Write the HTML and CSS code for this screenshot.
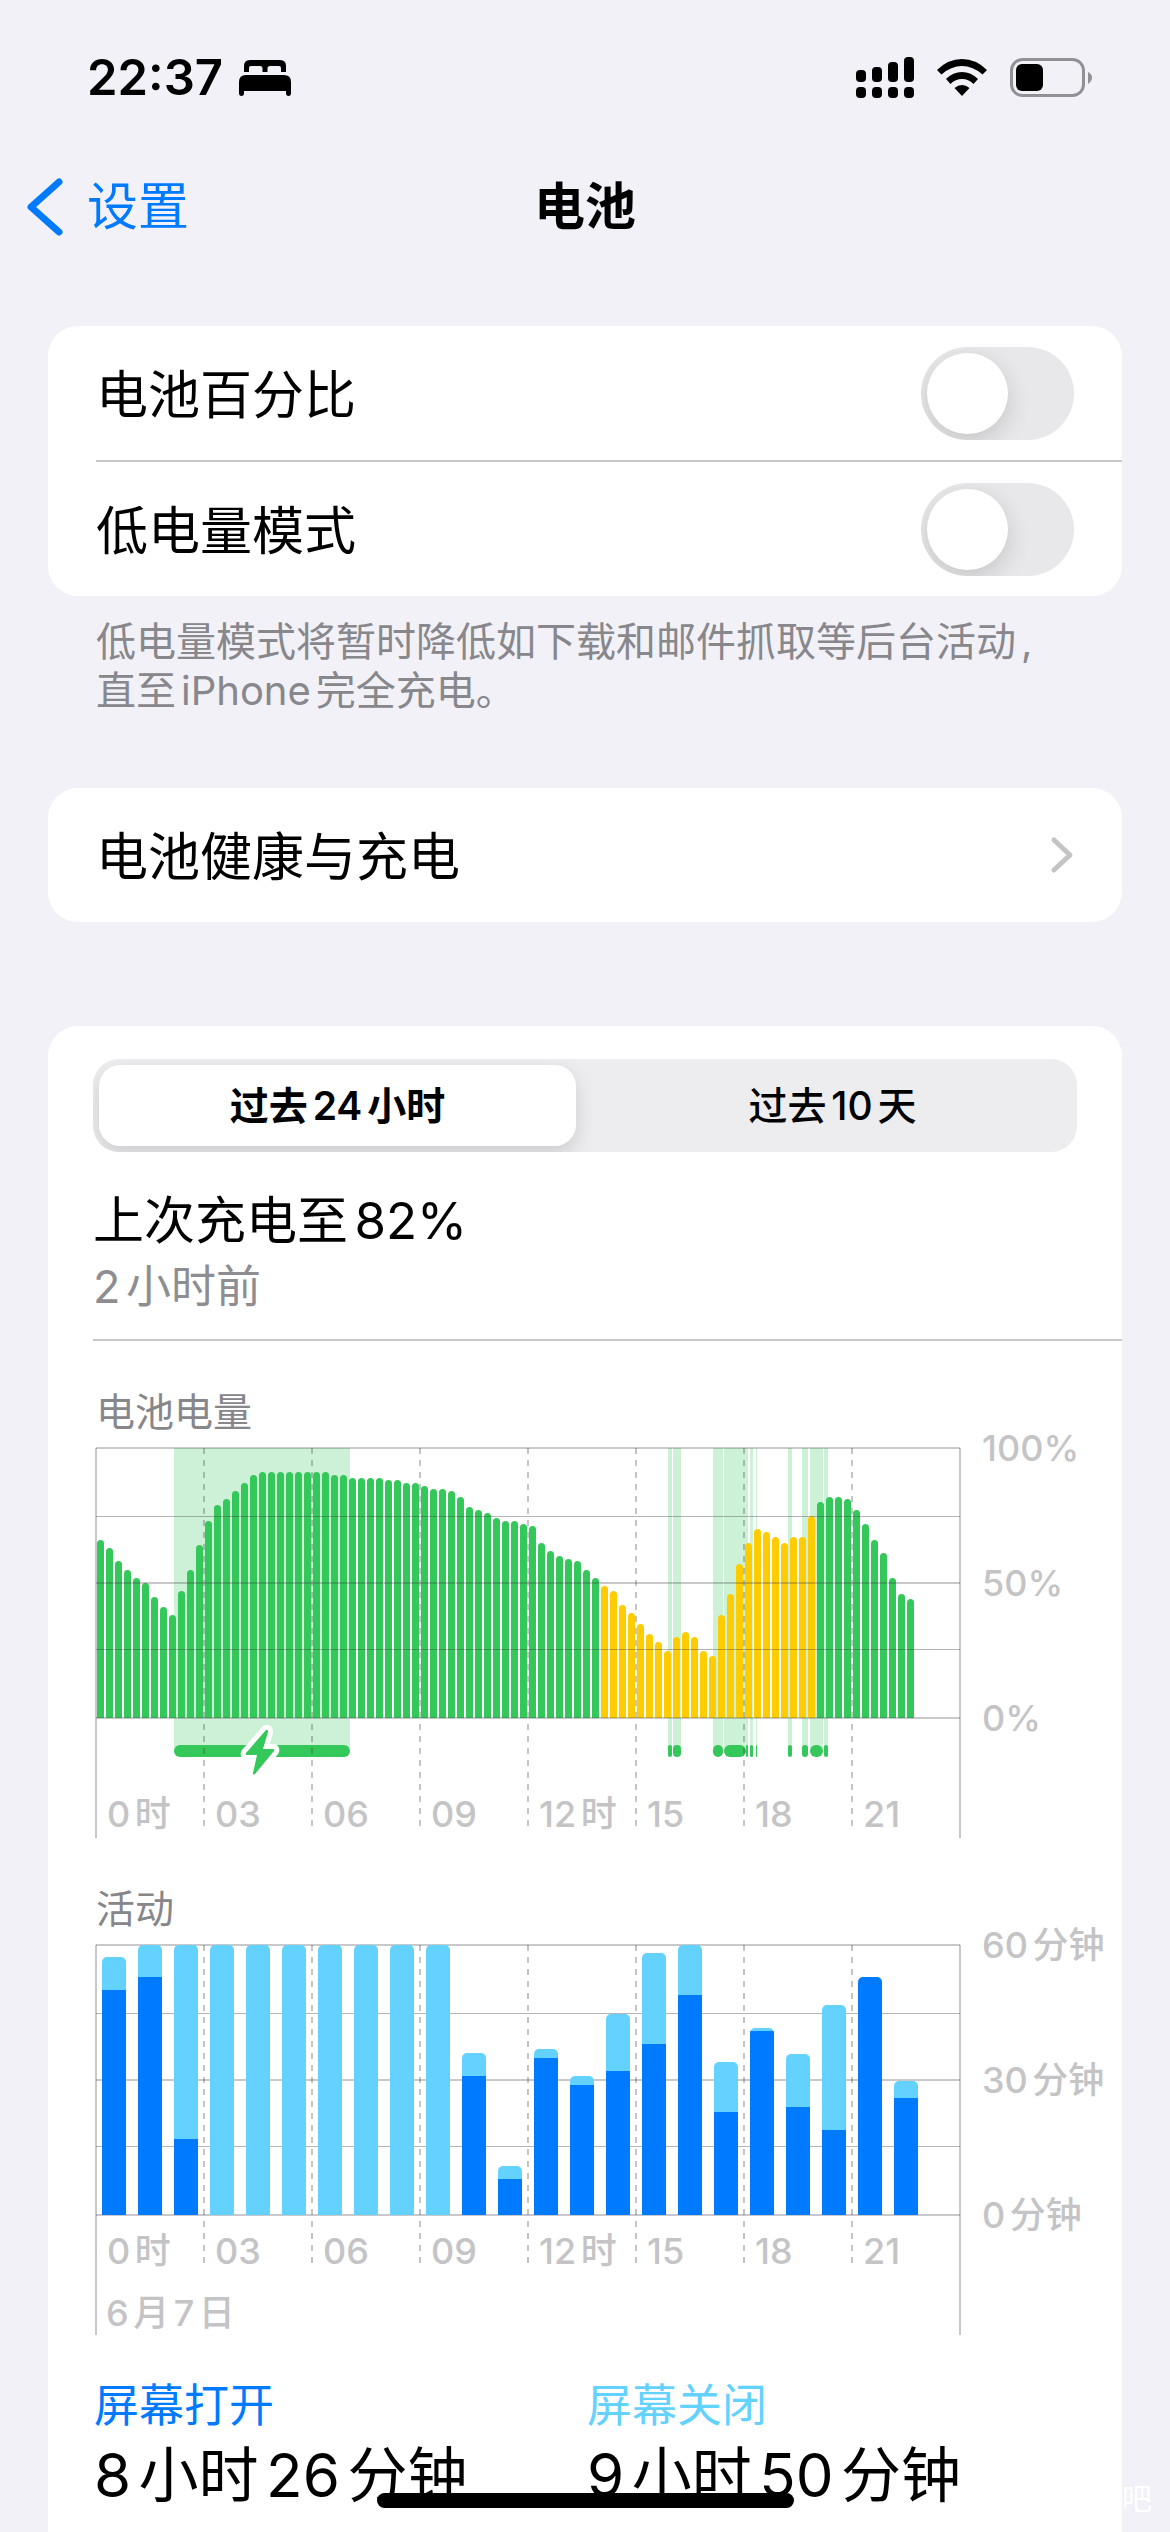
FILE: index.html
```html
<!DOCTYPE html>
<html lang="zh-CN">
<head>
    <meta charset="UTF-8">
    <meta name="viewport" content="width=device-width, initial-scale=1.0">
    <title>电池</title>
    <link rel="stylesheet" href="styles.css">
</head>
<body>
    <!-- Status bar -->
    <div class="status-bar">
        <div class="status-left">
            <span class="time">22:37</span>
            <svg width="52" height="36" viewBox="0 0 52 36">
                <path d="M5 12V6Q5 0 11 0H41Q47 0 47 6V12H42V8Q42 6 40 6H31Q28.500 6 28.500 8.500V12H23.500V8.500Q23.500 6 21 6H12Q10 6 10 8V12Z"/>
                <path d="M0 22Q0 15 7 15H45Q52 15 52 22V33Q52 36 49.500 36Q47 36 47 33V31H5V33Q5 36 2.500 36Q0 36 0 33Z"/>
            </svg>
        </div>
        <div class="status-right">
            <svg width="58" height="42" viewBox="0 0 58 42">
                <rect x="0" y="13" width="10" height="12" rx="4"/>
                <rect x="16" y="10" width="10" height="15" rx="4"/>
                <rect x="32" y="5" width="10" height="20" rx="4"/>
                <rect x="48" y="0" width="10" height="25" rx="4"/>
                <rect x="0" y="30" width="10" height="11" rx="4"/>
                <rect x="16" y="30" width="10" height="11" rx="4"/>
                <rect x="32" y="30" width="10" height="11" rx="4"/>
                <rect x="48" y="30" width="10" height="11" rx="4"/>
            </svg>
            <svg width="50" height="38" viewBox="0 0 50 38">
                <path d="M0 11Q11 0 25 0T50 11L45.500 15.500Q36 7 25 7T4.500 15.500Z"/>
                <path d="M9 20Q16 13 25 13T41 20L36.500 25Q31.500 20 25 20T13.500 25Z"/>
                <path d="M17.500 29Q21 26 25 26T32.500 29L25 37Z"/>
            </svg>
            <svg width="83" height="40" viewBox="0 0 83 40">
                <rect x="1.500" y="1.500" width="72" height="36" rx="11" fill="none" stroke="#919195" stroke-width="3"/>
                <rect x="6" y="6" width="27" height="27" rx="6"/>
                <path d="M78 14Q82 16 82 19.500T78 26Z" fill="#919195"/>
            </svg>
        </div>
    </div>

    <!-- Navigation -->
    <header class="nav">
        <a href="#" class="back">
            <svg width="36" height="58" viewBox="0 0 36 58">
                <path d="M32 4L4 29L32 54" fill="none" stroke="#007aff" stroke-width="7" stroke-linecap="round" stroke-linejoin="round"/>
            </svg>
            设置
        </a>
        <h1>电池</h1>
    </header>

    <main>
        <section class="card">
            <div class="row">
                <label for="percentage">电池百分比</label>
                <input type="checkbox" class="switch" id="percentage">
            </div>
            <div class="row">
                <label for="low-power">低电量模式</label>
                <input type="checkbox" class="switch" id="low-power">
            </div>
        </section>
        <p class="note">低电量模式将暂时降低如下载和邮件抓取等后台活动, 直至iPhone完全充电。</p>

        <a href="#" class="card row">
            <span>电池健康与充电</span>
            <svg width="24" height="38" viewBox="0 0 24 38">
                <path d="M4 4L20 19L4 34" fill="none" stroke="#c4c4c6" stroke-width="5" stroke-linecap="round" stroke-linejoin="round"/>
            </svg>
        </a>

        <section class="card usage">
            <div class="segmented">
                <button type="button" class="active">过去24小时</button>
                <button type="button">过去10天</button>
            </div>

            <div class="last-charge">
                <h2>上次充电至82%</h2>
                <p>2小时前</p>
            </div>

            <h3>电池电量</h3>
            <div class="chart battery">
                <div class="plot">
                    <div class="charging" id="charging"></div>
                    <div class="bars" id="battery-bars"></div>
                    <div class="lines"></div>
                    <div class="hours">
                        <span>0时</span><span>03</span><span>06</span><span>09</span>
                        <span>12时</span><span>15</span><span>18</span><span>21</span>
                    </div>
                    <svg class="bolt" width="42" height="56" viewBox="0 0 42 56">
                        <path d="M27 6L7 29Q6 31 8 31H18L14 49Q14 52 16 50L35 27Q36 25 34 25H24L29 8Q29 5 27 6Z" fill="#34c759" stroke="#fff" stroke-width="10" stroke-linejoin="round" paint-order="stroke"/>
                    </svg>
                </div>
                <div class="scale"><span>100%</span><span>50%</span><span>0%</span></div>
            </div>

            <h3>活动</h3>
            <div class="chart activity">
                <div class="plot">
                    <div class="lines"></div>
                    <div class="bars" id="activity-bars"></div>
                    <div class="hours">
                        <span>0时</span><span>03</span><span>06</span><span>09</span>
                        <span>12时</span><span>15</span><span>18</span><span>21</span>
                    </div>
                    <div class="date">6月7日</div>
                </div>
                <div class="scale"><span>60分钟</span><span>30分钟</span><span>0分钟</span></div>
            </div>

            <div class="totals">
                <div>
                    <p class="screen-on">屏幕打开</p>
                    <p class="total">8小时26分钟</p>
                </div>
                <div>
                    <p class="screen-off">屏幕关闭</p>
                    <p class="total">9小时50分钟</p>
                </div>
            </div>
        </section>
    </main>

    <div class="watermark">吧</div>
    <div class="home-indicator"></div>

    <script src="script.js"></script>
</body>
</html>
```
FILE: styles.css
```css
* {
  margin: 0;
  padding: 0;
  box-sizing: border-box;
}

body {
  font-family: Inter, "Noto Sans CJK SC", sans-serif;
  font-size: 51px;
  line-height: 66px;
  text-autospace: normal;
  background-color: #f2f1f7;
  color: #000;
  display: flex;
  flex-direction: column;
  min-height: 100vh;
}

a {
  color: inherit;
  text-decoration: none;
}

svg {
  display: block;
}

/* Status bar */
.status-bar {
  display: flex;
  justify-content: space-between;
  align-items: center;
  height: 156px;
  padding: 0 77px 0 87px;
}

.status-left, .status-right {
  display: flex;
  align-items: center;
}

.status-left {
  gap: 16px;
}

.status-right {
  gap: 23px;
}

.time {
  font-size: 49px;
  font-weight: 600;
}

/* Navigation */
.nav {
  display: grid;
  grid-template-columns: 1fr auto 1fr;
  align-items: center;
  height: 102px;
  padding: 0 27px;
  margin-bottom: 68px;
}

.nav h1 {
  font-size: 51px;
  font-weight: 600;
}

.back {
  display: flex;
  align-items: center;
  gap: 24px;
  color: #007aff;
}

/* Cards */
main {
  flex: 1;
  display: flex;
  flex-direction: column;
  padding: 0 48px;
}

.card {
  background-color: #fff;
  border-radius: 30px;
}

.row {
  display: flex;
  justify-content: space-between;
  align-items: center;
  height: 134px;
  padding: 0 48px;
  font-size: 52px;
}

.row label, .row span {
  padding-top: 6px;
}

.row + .row {
  height: 136px;
  margin-left: 48px;
  padding-left: 0;
  border-top: 2px solid #c8c8ca;
}

.switch {
  appearance: none;
  width: 153px;
  height: 93px;
  padding: 6px;
  border-radius: 47px;
  background-color: #e8e8ea;
  overflow: hidden;
  cursor: pointer;
}

.switch::before {
  content: "";
  display: block;
  width: 81px;
  height: 81px;
  border-radius: 50%;
  background-color: #fff;
  box-shadow: 0 8px 24px rgba(0, 0, 0, 0.15);
}

.switch:checked {
  background-color: #34c759;
}

.switch:checked::before {
  margin-left: 60px;
}

.note {
  font-size: 40px;
  line-height: 49px;
  color: #87878c;
  margin: 21px 48px 73px 48px;
}

/* Usage card */
.usage {
  flex: 1;
  margin-top: 104px;
  padding: 33px 0 0 48px;
  border-radius: 30px 30px 0 0;
}

.segmented {
  display: grid;
  grid-template-columns: 1fr 1fr;
  gap: 18px;
  height: 93px;
  padding: 6px;
  margin: 0 45px 36px -3px;
  border-radius: 26px;
  background-color: #ededef;
  overflow: hidden;
}

.segmented button {
  font: inherit;
  font-size: 39px;
  font-weight: 500;
  line-height: 48px;
  text-autospace: inherit;
  color: #000;
  background: none;
  border: none;
  border-radius: 21px;
  cursor: pointer;
}

.segmented .active {
  font-weight: 600;
  background-color: #fff;
  box-shadow: 0 8px 20px rgba(0, 0, 0, 0.14);
}

.last-charge {
  padding-bottom: 19px;
  margin-left: -3px;
  border-bottom: 2px solid #c8c8ca;
}

.last-charge h2 {
  font-size: 51px;
  font-weight: 400;
}

.last-charge p {
  font-size: 45px;
  color: #8e8e92;
}

.usage h3 {
  font-size: 39px;
  font-weight: 400;
  line-height: 48px;
  color: #87878b;
  margin: 47px 0 12px 0;
}

/* Charts */
.chart {
  display: grid;
  grid-template-columns: 1fr 162px;
  font-size: 36px;
  font-weight: 500;
  line-height: 40px;
  color: #c4c4c6;
}

.plot {
  position: relative;
  height: 390px;
}

/* left and right edge of the plot */
.plot::before {
  content: "";
  position: absolute;
  inset: 0 -1px 0 -1px;
  border-left: 2px solid #c8c8ca;
  border-right: 2px solid #c8c8ca;
}

.lines {
  position: absolute;
  top: -1px;
  left: 0;
  right: 0;
  height: 272px;
  border-top: 2px solid rgba(60, 60, 67, 0.28);
  border-bottom: 2px solid rgba(60, 60, 67, 0.28);
  background-image:
    linear-gradient(rgba(60, 60, 67, 0.38), rgba(60, 60, 67, 0.38)),
    linear-gradient(rgba(60, 60, 67, 0.28), rgba(60, 60, 67, 0.28)),
    linear-gradient(rgba(60, 60, 67, 0.38), rgba(60, 60, 67, 0.38));
  background-size: 100% 1px, 100% 2px, 100% 1px;
  background-position: 0 25%, 0 50%, 0 75%;
  background-repeat: no-repeat;
}

.bars {
  position: relative;
  display: grid;
  height: 270px;
  align-items: end;
}

.battery .bars {
  grid-template-columns: repeat(96, 1fr);
}

.battery .bars span {
  margin: 0 1px;
  border-radius: 4px 4px 0 0;
  background-color: #34c759;
}

.battery .bars .low-power {
  background-color: #ffcc00;
}

.activity .bars {
  grid-template-columns: repeat(24, 1fr);
}

.activity .bars div {
  display: flex;
  flex-direction: column;
  justify-content: flex-end;
  margin: 0 6px;
  border-radius: 5px 5px 0 0;
  background-color: #64d2ff;
  overflow: hidden;
}

.activity .bars span {
  background-color: #007aff;
}

.charging span {
  position: absolute;
  top: 0;
  height: 309px;
  background: linear-gradient(#cdf1d6, #cdf1d6) no-repeat;
  background-size: 100% 300px;
}

.charging span::after {
  content: "";
  position: absolute;
  left: 0;
  right: 0;
  bottom: 0;
  height: 12px;
  border-radius: 6px;
  background-color: #34c759;
}

.bolt {
  position: absolute;
  top: 276px;
  left: 19%;
  transform: translateX(-50%);
}

.hours {
  position: absolute;
  top: 0;
  left: -1px;
  right: 1px;
  height: 384px;
  display: grid;
  grid-template-columns: repeat(8, 1fr);
  align-items: stretch;
}

.activity .hours {
  height: 324px;
}

.hours span {
  display: flex;
  align-items: flex-end;
  padding-left: 12px;
  line-height: 36px;
  white-space: nowrap;
  background: repeating-linear-gradient(rgba(60, 60, 67, 0.3) 0 6px, transparent 6px 12px) no-repeat;
  background-size: 2px 100%;
}

.hours span:first-child {
  background: none;
}

.date {
  position: absolute;
  bottom: 2px;
  left: 10px;
}

.scale {
  display: flex;
  flex-direction: column;
  justify-content: space-between;
  height: 310px;
  margin-top: -20px;
  padding-left: 22px;
  white-space: nowrap;
}

/* Totals */
.totals {
  display: grid;
  grid-template-columns: 1fr 1fr;
  margin: 41px 42px 0 -2px;
}

.screen-on, .screen-off {
  font-size: 45px;
  line-height: 60px;
  color: #007aff;
}

.screen-off {
  color: #64d2ff;
}

.total {
  font-size: 60px;
  line-height: 78px;
  white-space: nowrap;
}

.home-indicator {
  position: fixed;
  left: 50%;
  bottom: 24px;
  width: 417px;
  height: 15px;
  margin-left: -208px;
  border-radius: 8px;
  background-color: #000;
}

.watermark {
  position: fixed;
  right: 18px;
  bottom: 14px;
  font-size: 30px;
  line-height: 40px;
  color: #fff;
}
```
FILE: script.js
```javascript
// Battery level every 15 minutes
const levels = [
    66, 63, 58, 55, 52, 50, 45, 41, 38, 47, 55, 64, 73, 79, 81, 84, 87, 90,
    91, 91, 91, 91, 91, 91, 91, 91, 90, 90, 89, 89, 89, 89, 88, 88, 87, 87,
    86, 85, 85, 84, 82, 78, 77, 76, 74, 73, 73, 72, 71, 65, 62, 60, 59, 58, 55, 52,
    49, 47, 42, 39, 35, 31, 28, 25, 30, 32, 30, 25, 23, 38, 46, 57, 65, 70,
    69, 67, 65, 67, 67, 75, 80, 82, 82, 81, 77, 72, 66, 61, 52, 46, 44
];
const lowPowerFrom = 56;
const lowPowerTo = 79;

// Charging periods, in minutes since midnight
const charging = [
    [130, 423], [953, 960], [961, 975], [1028, 1045], [1046, 1083], [1084, 1087],
    [1090, 1095], [1100, 1102], [1154, 1160], [1177, 1187], [1190, 1212], [1213, 1220]
];

// Minutes per hour: [total, screen on]
const activity = [
    [57.3, 50], [60, 53], [60, 17], [60, 0], [60, 0], [60, 0], [60, 0], [60, 0],
    [60, 0], [60, 0], [36, 31], [11, 8], [37, 35], [31, 29], [44.7, 32], [58.2, 38],
    [60, 49], [34, 23], [41.5, 41], [35.8, 24], [46.7, 19], [53, 53], [29.7, 26]
];

document.getElementById("battery-bars").innerHTML = levels.map((level, i) => {
    const low = i >= lowPowerFrom && i <= lowPowerTo;
    return `<span class="${low ? "low-power" : ""}" style="height: ${level}%"></span>`;
}).join("");

document.getElementById("charging").innerHTML = charging.map(([start, end]) =>
    `<span style="left: ${start / 14.4}%; width: ${(end - start) / 14.4}%"></span>`
).join("");

document.getElementById("activity-bars").innerHTML = activity.map(([total, on]) =>
    `<div style="height: ${total / 0.6}%"><span style="height: ${on / total * 100}%"></span></div>`
).join("");

// Segmented control
const segments = document.querySelectorAll(".segmented button");
segments.forEach(button => {
    button.addEventListener("click", () => {
        segments.forEach(b => b.classList.toggle("active", b === button));
    });
});
```
